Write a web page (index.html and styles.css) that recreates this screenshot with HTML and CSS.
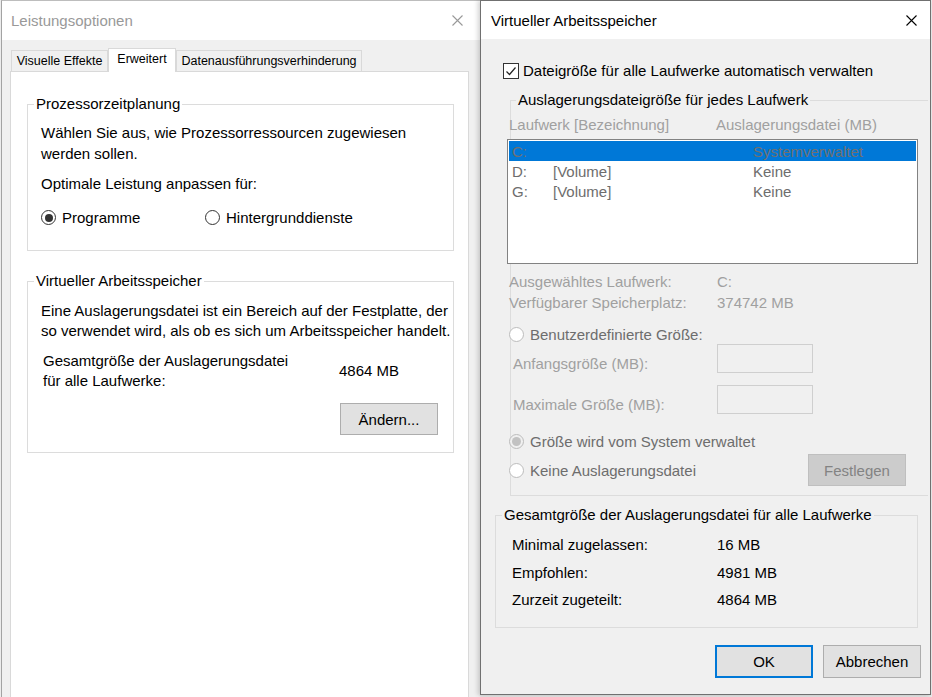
FILE: index.html
```html
<!DOCTYPE html>
<html lang="de">
<head>
    <meta charset="UTF-8">
    <title>Leistungsoptionen - Virtueller Arbeitsspeicher</title>
    <link rel="stylesheet" href="styles.css">
</head>
<body>
    <div class="desk">
        <!-- Leistungsoptionen (inaktiv, im Hintergrund) -->
        <section class="win win-perf">
            <header class="titlebar inactive">
                <span class="title">Leistungsoptionen</span>
                <svg class="close" width="11" height="11" viewBox="0 0 11 11"><path d="M0.5 0.5L10.5 10.5M10.5 0.5L0.5 10.5" stroke="currentColor" stroke-width="1.1" fill="none"/></svg>
            </header>
            <div class="perf-body">
                <div class="tabs">
                    <div class="tab tab-visual">Visuelle Effekte</div>
                    <div class="tab tab-adv active">Erweitert</div>
                    <div class="tab tab-dep">Datenausführungsverhinderung</div>
                </div>
                <div class="tab-panel">
                    <fieldset class="group group-cpu">
                        <legend>Prozessorzeitplanung</legend>
                        <div class="group-body">
                            <p class="txt">Wählen Sie aus, wie Prozessorressourcen zugewiesen<br>werden sollen.</p>
                            <p class="txt opt">Optimale Leistung anpassen für:</p>
                            <div class="radio-row">
                                <label class="radio-item prog"><span class="radio checked"></span>Programme</label>
                                <label class="radio-item"><span class="radio"></span>Hintergrunddienste</label>
                            </div>
                        </div>
                    </fieldset>

                    <fieldset class="group group-vm">
                        <legend>Virtueller Arbeitsspeicher</legend>
                        <div class="group-body">
                            <p class="txt">Eine Auslagerungsdatei ist ein Bereich auf der Festplatte, der<br>so verwendet wird, als ob es sich um Arbeitsspeicher handelt.</p>
                            <div class="total-row">
                                <span class="total-label">Gesamtgröße der Auslagerungsdatei<br>für alle Laufwerke:</span>
                                <span>4864 MB</span>
                            </div>
                            <button class="btn change-btn">Ändern...</button>
                        </div>
                    </fieldset>
                </div>
            </div>
        </section>

        <!-- Virtueller Arbeitsspeicher (aktiv) -->
        <section class="win win-vm">
            <header class="titlebar">
                <span class="title">Virtueller Arbeitsspeicher</span>
                <svg class="close" width="11" height="11" viewBox="0 0 11 11"><path d="M0.5 0.5L10.5 10.5M10.5 0.5L0.5 10.5" stroke="currentColor" stroke-width="1.1" fill="none"/></svg>
            </header>
            <div class="vm-body">
                <label class="check-row">
                    <span class="checkbox"><svg width="14" height="14" viewBox="0 0 14 14"><path d="M2.5 7.5L5.5 10.5L11.5 3.5" stroke="#222" stroke-width="1.2" fill="none"/></svg></span>
                    Dateigröße für alle Laufwerke automatisch verwalten
                </label>

                <fieldset class="group group-drives">
                    <legend>Auslagerungsdateigröße für jedes Laufwerk</legend>
                    <div class="cols">
                        <span>Laufwerk [Bezeichnung]</span>
                        <span>Auslagerungsdatei (MB)</span>
                    </div>
                    <div class="drive-list">
                        <div class="drive sel"><span>C:</span><span></span><span>Systemverwaltet</span></div>
                        <div class="drive"><span>D:</span><span>[Volume]</span><span>Keine</span></div>
                        <div class="drive"><span>G:</span><span>[Volume]</span><span>Keine</span></div>
                    </div>
                    <div class="info">
                        <span>Ausgewähltes Laufwerk:</span><span>C:</span>
                        <span>Verfügbarer Speicherplatz:</span><span>374742 MB</span>
                    </div>
                    <label class="opt-row custom"><span class="radio off"></span>Benutzerdefinierte Größe:</label>
                    <div class="size-row first">
                        <span class="size-label">Anfangsgröße (MB):</span>
                        <span class="field"></span>
                    </div>
                    <div class="size-row">
                        <span class="size-label">Maximale Größe (MB):</span>
                        <span class="field"></span>
                    </div>
                    <label class="opt-row system"><span class="radio off checked"></span>Größe wird vom System verwaltet</label>
                    <div class="none-row">
                        <label class="none-label"><span class="radio off"></span>Keine Auslagerungsdatei</label>
                        <button class="btn btn-disabled">Festlegen</button>
                    </div>
                </fieldset>

                <fieldset class="group group-totals">
                    <legend>Gesamtgröße der Auslagerungsdatei für alle Laufwerke</legend>
                    <div class="totals">
                        <span>Minimal zugelassen:</span><span>16 MB</span>
                        <span>Empfohlen:</span><span>4981 MB</span>
                        <span>Zurzeit zugeteilt:</span><span>4864 MB</span>
                    </div>
                </fieldset>

                <div class="dlg-buttons">
                    <button class="btn btn-default">OK</button>
                    <button class="btn">Abbrechen</button>
                </div>
            </div>
        </section>
    </div>
</body>
</html>
```

FILE: styles.css
```css
html, body {
    margin: 0;
    height: 697px;
    overflow: hidden;
}
body {
    font-family: "Liberation Sans", Arial, sans-serif;
    font-size: 15px;
    color: #000;
    background-color: #ececec;
}
.desk {
    display: flex;
    height: 697px;
    overflow: hidden;
}
.win {
    box-sizing: border-box;
    background-color: #f0f0f0;
    display: flex;
    flex-direction: column;
}
.titlebar {
    display: flex;
    align-items: center;
    justify-content: space-between;
    background-color: #fff;
    flex-shrink: 0;
}
.titlebar.inactive {
    color: #999;
}
.close {
    display: block;
}

/* Leistungsoptionen */
.win-perf {
    width: 479px;
    height: 730px;
    margin-left: 1px;
    border-left: 1px solid #a3a3a3;
    border-top: 1px solid #bdbdbd;
}
.win-perf .titlebar {
    height: 39px;
    padding: 0 17px 0 9px;
}
.perf-body {
    flex: 1;
    display: flex;
    flex-direction: column;
    padding: 8px 11px 0 8px;
}
.tabs {
    display: flex;
    align-items: flex-end;
    height: 23px;
    margin-left: 1px;
}
.tab {
    box-sizing: border-box;
    height: 21px;
    border: 1px solid #d9d9d9;
    border-bottom: none;
    font-size: 12.5px;
    line-height: 20px;
    text-align: center;
    white-space: nowrap;
}
.tab.active {
    height: 24px;
    margin-bottom: -1px;
    background-color: #fff;
    position: relative;
    z-index: 1;
}
.tab-visual { width: 97px; }
.tab-adv { width: 68px; }
.tab-dep { width: 186px; }
.tab-panel {
    flex: 1;
    background-color: #fff;
    border: 1px solid #d9d9d9;
    padding: 0 14px 0 16px;
}

/* Gruppenfelder */
.group {
    box-sizing: border-box;
    margin: 0;
    padding: 0;
    min-width: 0;
    border: 1px solid #dcdcdc;
}
.group legend {
    padding: 0 2px;
    margin-left: 6px;
    line-height: 20px;
}
.group-body {
    padding-left: 13px;
}
.txt {
    margin: 0;
}
.group-cpu {
    width: 427px;
    margin-top: 22px;
    padding-bottom: 22px;
}
.group-cpu .txt {
    line-height: 21px;
    margin-top: 8px;
}
.group-cpu .opt {
    margin-top: 9px;
}
.radio-row {
    display: flex;
    margin-top: 13px;
    line-height: 21px;
}
.radio-item {
    display: flex;
    align-items: center;
    gap: 6px;
}
.radio-item.prog {
    width: 164px;
}
.radio {
    box-sizing: border-box;
    width: 15px;
    height: 15px;
    border: 1px solid #333;
    border-radius: 50%;
    background-color: #fff;
    display: flex;
    align-items: center;
    justify-content: center;
    flex-shrink: 0;
}
.radio.checked::after {
    content: "";
    width: 8px;
    height: 8px;
    border-radius: 50%;
    background-color: #333;
}
.radio.off {
    border-color: #bcbcbc;
}
.radio.off.checked {
    background-color: #f0f0f0;
}
.radio.off.checked::after {
    width: 9px;
    height: 9px;
    background-color: #c2c2c2;
}
.group-vm {
    width: 427px;
    margin-top: 20px;
    padding-bottom: 17px;
}
.group-vm .txt {
    line-height: 20px;
    margin-top: 10px;
}
.total-row {
    display: flex;
    align-items: center;
    margin-top: 10px;
    padding-left: 2px;
    line-height: 20px;
}
.total-label {
    width: 296px;
}
.btn {
    box-sizing: border-box;
    width: 98px;
    height: 32px;
    border: 1px solid #adadad;
    background-color: #e1e1e1;
    font-family: inherit;
    font-size: 15px;
    color: #000;
    padding: 0;
}
.change-btn {
    display: block;
    margin: 12px 0 0 299px;
}

/* Virtueller Arbeitsspeicher */
.win-vm {
    width: 451px;
    height: 695px;
    border: 1px solid #707070;
    box-shadow: -3px 0 4px rgba(0,0,0,0.12), 0 2px 3px rgba(0,0,0,0.08);
    position: relative;
}
.win-vm .titlebar {
    height: 38px;
    padding: 0 13px 0 10px;
}
.vm-body {
    flex: 1;
}
.check-row {
    display: flex;
    align-items: center;
    gap: 4px;
    margin: 22px 0 0 22px;
    line-height: 20px;
}
.checkbox {
    box-sizing: border-box;
    width: 16px;
    height: 16px;
    border: 1px solid #333;
    background-color: #fff;
    display: flex;
    align-items: center;
    justify-content: center;
}
.group-drives {
    width: 418px;
    margin: 9px 0 0 29px;
    border-right: none;
    padding-bottom: 9px;
}
.group-drives legend {
    margin-left: 5px;
}
.cols {
    display: grid;
    grid-template-columns: 207px 1fr;
    margin: 5px 0 0 -2px;
    line-height: 20px;
    color: #a0a0a0;
}
.drive-list {
    box-sizing: border-box;
    width: 411px;
    height: 125px;
    margin: 4px 0 0 -4px;
    padding: 1px;
    border: 1px solid #828282;
    background-color: #fff;
}
.drive {
    display: grid;
    grid-template-columns: 41px 200px 1fr;
    height: 20px;
    padding-left: 3px;
    line-height: 21px;
    color: #6d6d6d;
}
.drive.sel {
    background-color: #0078d7;
    color: #707070;
}
.info {
    display: grid;
    grid-template-columns: 208px 1fr;
    margin: 7px 0 0 -2px;
    line-height: 21px;
    color: #a0a0a0;
}
.opt-row {
    display: flex;
    align-items: center;
    gap: 6px;
    margin-left: -2px;
    line-height: 21px;
    color: #6d6d6d;
}
.opt-row.custom {
    margin-top: 11px;
}
.opt-row.system {
    margin-top: 16px;
}
.size-row {
    display: flex;
    margin: 11px 0 0 2px;
}
.size-row.first {
    margin-top: -1px;
}
.size-label {
    width: 204px;
    padding-top: 9px;
    line-height: 21px;
    color: #a0a0a0;
}
.field {
    box-sizing: border-box;
    width: 96px;
    height: 29px;
    border: 1px solid #cfcfcf;
    background-color: #f0f0f0;
}
.none-row {
    display: flex;
    align-items: center;
    height: 32px;
    margin: 2px 0 0 -2px;
}
.none-label {
    display: flex;
    align-items: center;
    gap: 6px;
    width: 299px;
    color: #6d6d6d;
}
.btn-disabled {
    background-color: #cccccc;
    border-color: #bfbfbf;
    color: #838383;
}
.group-totals {
    width: 423px;
    margin: 9px 0 0 14px;
    padding-bottom: 13px;
}
.totals {
    display: grid;
    grid-template-columns: 205px 1fr;
    margin: 6px 0 0 16px;
    line-height: 27.5px;
}
.dlg-buttons {
    display: flex;
    justify-content: flex-end;
    gap: 10px;
    margin: 17px 9px 0 0;
}
.dlg-buttons .btn {
    height: 33px;
}
.btn-default {
    border: 2px solid #0078d7;
}
```
